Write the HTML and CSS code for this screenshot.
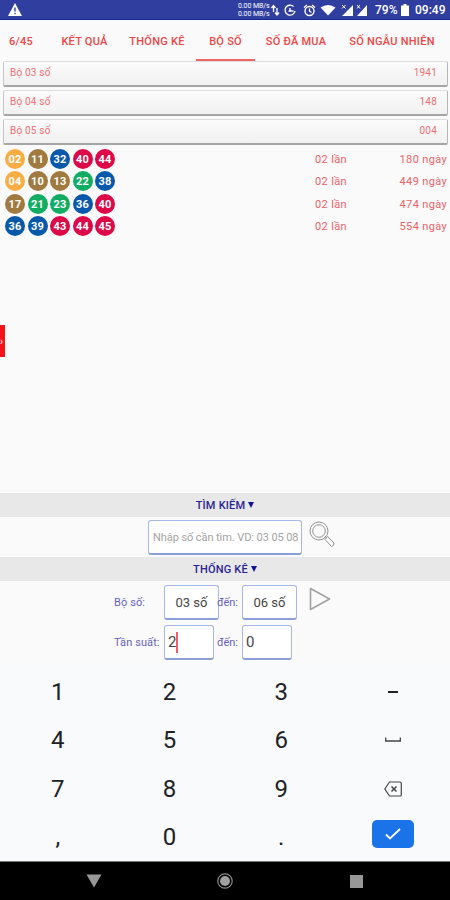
FILE: index.html
```html
<!DOCTYPE html>
<html lang="vi">
<head>
    <meta charset="UTF-8">
    <meta name="viewport" content="width=device-width, initial-scale=1.0">
    <title>Bộ số 6/45</title>
    <link rel="stylesheet" href="styles.css">
</head>
<body>
    <!-- Status bar -->
    <header class="status-bar">
        <svg class="warning" width="14" height="13" viewBox="0 0 14 13"><path d="M7 0L14 13H0Z" fill="#fff"/><path d="M7 4.5v4M7 9.7v1.5" stroke="#303f9f" stroke-width="1.4"/></svg>
        <div class="net-speed"><span>0.00 MB/s</span><span>0.00 MB/s</span></div>
        <svg class="status-icons" width="98" height="20" viewBox="0 0 98 20" fill="none" stroke="#fff">
            <path d="M2.500 12V6M.5 8l2-2.500 2 2.500M6 8v6.500M4 12.500l2 2.500 2-2.500" stroke-width="1.300"/>
            <path d="M22.500 6.500a5 5 0 1 0 1.500 4.500M19 8v3h3M17.500 11h5" stroke-width="1.400"/>
            <circle cx="38.500" cy="11" r="4.500" stroke-width="1.400"/>
            <path d="M38.500 8.500V11l2 1.500M33 7.500l3-2.500M44 7.500l-3-2.500" stroke-width="1.300"/>
            <path d="M49.500 7.500Q57 2.500 64.500 7.500L57 15.500Z" fill="#fff" stroke="none"/>
            <path d="M82 5v11H71ZM96 5v11H86Z" fill="#fff" stroke="none"/>
            <path d="M71 5l3.500 3.500M74.500 5L71 8.500M86 5l3 3.500M89 5l-3 3.500" stroke-width="1"/>
        </svg>
        <span class="battery-text">79%</span>
        <svg class="battery" width="8" height="12" viewBox="0 0 8 12"><path d="M2.500 0h3v1.500H8V12H0V1.500h2.500Z" fill="#fff"/></svg>
        <span class="clock">09:49</span>
    </header>

    <!-- Tabs -->
    <nav class="tabs">
        <a class="tab first">6/45</a>
        <a class="tab">KẾT QUẢ</a>
        <a class="tab">THỐNG KÊ</a>
        <a class="tab active">BỘ SỐ</a>
        <a class="tab">SỐ ĐÃ MUA</a>
        <a class="tab">SỐ NGẪU NHIÊN</a>
    </nav>

    <main class="content">
        <div class="groups">
            <div class="group"><span>Bộ 03 số</span><span>1941</span></div>
            <div class="group"><span>Bộ 04 số</span><span>148</span></div>
            <div class="group"><span>Bộ 05 số</span><span>004</span></div>
        </div>

        <div class="results">
            <div class="result">
                <div class="balls"><b class="orange">02</b><b class="brown">11</b><b class="blue">32</b><b class="red">40</b><b class="red">44</b></div>
                <span class="times">02 lần</span><span class="days">180 ngày</span>
            </div>
            <div class="result">
                <div class="balls"><b class="orange">04</b><b class="brown">10</b><b class="brown">13</b><b class="green">22</b><b class="blue">38</b></div>
                <span class="times">02 lần</span><span class="days">449 ngày</span>
            </div>
            <div class="result">
                <div class="balls"><b class="brown">17</b><b class="green">21</b><b class="green">23</b><b class="blue">36</b><b class="red">40</b></div>
                <span class="times">02 lần</span><span class="days">474 ngày</span>
            </div>
            <div class="result">
                <div class="balls"><b class="blue">36</b><b class="blue">39</b><b class="red">43</b><b class="red">44</b><b class="red">45</b></div>
                <span class="times">02 lần</span><span class="days">554 ngày</span>
            </div>
        </div>
        <div class="drawer-handle">›</div>
    </main>

    <!-- Search -->
    <h2 class="section-title">TÌM KIẾM <i></i></h2>
    <div class="search">
        <div class="box search-box">Nhập số cần tìm. VD: 03 05 08</div>
        <svg width="26" height="27" viewBox="0 0 26 27" fill="none" stroke="#929292" stroke-width="1">
            <circle cx="10" cy="10" r="9"/><circle cx="10" cy="10" r="6.300"/>
            <path d="M15 17l2-2M16 18.500l2.500-3 6.500 6.500q.5 2.500-2.500 3.500Z"/>
        </svg>
    </div>

    <!-- Statistics -->
    <h2 class="section-title">THỐNG KÊ <i></i></h2>
    <div class="stats">
        <div class="stats-row">
            <span class="label">Bộ số:</span>
            <div class="box select">03 số</div>
            <span class="label to">đến:</span>
            <div class="box select">06 số</div>
            <svg class="play" width="22" height="24" viewBox="0 0 22 24"><path d="M1.500 1.500L20.500 12L1.500 22.500Z" fill="none" stroke="#a2a2a2" stroke-width="1.600" stroke-linejoin="round"/></svg>
        </div>
        <div class="stats-row">
            <span class="label">Tần suất:</span>
            <div class="box number">2<span class="caret"></span></div>
            <span class="label to wide">đến:</span>
            <div class="box number">0</div>
        </div>
    </div>

    <!-- Keyboard -->
    <div class="keyboard">
        <span>1</span><span>2</span><span>3</span>
        <span><svg width="12" height="24" viewBox="0 0 12 24"><path d="M1 12h10" stroke="#222" stroke-width="2"/></svg></span>
        <span>4</span><span>5</span><span>6</span>
        <span><svg width="16" height="24" viewBox="0 0 16 24"><path d="M.7 9.500v3.500h14.600V9.500" fill="none" stroke="#444" stroke-width="1.300"/></svg></span>
        <span>7</span><span>8</span><span>9</span>
        <span><svg width="18" height="16" viewBox="0 0 18 16" fill="none" stroke="#444" stroke-width="1.200"><path d="M5.500 1H16q1.300 0 1.300 1.300v11.400Q17.300 15 16 15H5.500L.8 8Z"/><path d="M7.500 5.500l5 5M12.500 5.500l-5 5" stroke-width="1.500"/></svg></span>
        <span>,</span><span>0</span><span>.</span>
        <span class="enter-cell"><span class="enter"><svg width="16" height="12" viewBox="0 0 16 12"><path d="M1 6.500l4 4L15 1" fill="none" stroke="#fff" stroke-width="1.800"/></svg></span></span>
    </div>

    <!-- Android navigation -->
    <footer class="nav-bar">
        <svg width="16" height="14" viewBox="0 0 16 14"><path d="M.5.5h15L8 13.500Z" fill="#979797"/></svg>
        <svg width="16" height="16" viewBox="0 0 16 16"><circle cx="8" cy="8" r="7.200" fill="none" stroke="#8b8b8b" stroke-width="1.200"/><circle cx="8" cy="8" r="5" fill="#a0a0a0"/></svg>
        <svg width="13" height="13" viewBox="0 0 13 13"><path d="M0 0h13v13H0Z" fill="#979797"/></svg>
    </footer>
</body>
</html>
```

FILE: styles.css
```css
* {
    box-sizing: border-box;
}
body {
    width: 450px;
    height: 900px;
    margin: 0;
    display: flex;
    flex-direction: column;
    overflow: hidden;
    background: #fafafa;
    font-family: Roboto, sans-serif;
}
svg {
    display: block;
    flex: none;
}

/* Status bar */
.status-bar {
    height: 20px;
    display: flex;
    align-items: center;
    background: #303f9f;
    border-bottom: 1px solid #1c2590;
    color: #fff;
}
.warning {
    margin-left: 8px;
}
.net-speed {
    width: 33px;
    margin-left: 216px;
    display: flex;
    flex-direction: column;
    font-size: 7px;
    line-height: 8px;
    letter-spacing: -0.1px;
    white-space: nowrap;
}
.status-icons {
    margin-right: 6px;
}
.battery-text,
.clock {
    font-size: 12px;
    font-weight: 500;
}
.battery-text {
    width: 26px;
}
.clock {
    margin-left: 6px;
}

/* Tabs */
.tabs {
    height: 41px;
    display: grid;
    grid-template-columns: 51px 67px 78px 59px 82px 110px;
}
.tab {
    padding-top: 3px;
    display: flex;
    align-items: center;
    justify-content: center;
    border-bottom: 2px solid transparent;
    color: #ef4545;
    font-size: 11px;
    font-weight: 500;
    letter-spacing: 0.25px;
    white-space: nowrap;
}
.first {
    padding-right: 9px;
}
.active {
    border-color: #f06464;
}

/* Groups */
.content {
    position: relative;
    flex: none;
    height: 432px;
}
.groups {
    display: flex;
    flex-direction: column;
    gap: 3px;
    padding: 0 2px 0 3px;
}
.group {
    height: 26px;
    padding: 4px 10px 0 6px;
    display: flex;
    justify-content: space-between;
    background: linear-gradient(#fbfbfb, #f1f1f1);
    border: 1px solid #dedede;
    border-bottom: 2px solid #a5a5a5;
    border-right-color: #b5b5b5;
    border-left-color: #c5c5c5;
    border-radius: 2px;
    color: #ef6f74;
    font-size: 10px;
    line-height: 13px;
    letter-spacing: 0.2px;
}

/* Results */
.results {
    padding: 4px 3px 0 5px;
}
.result {
    height: 22.4px;
    display: flex;
    color: #ee6267;
    font-size: 11px;
    line-height: 21px;
    letter-spacing: 0.35px;
}
.balls {
    width: 310px;
    display: flex;
    gap: 2.5px;
}
.balls b {
    width: 20px;
    height: 20px;
    border-radius: 50%;
    color: #fff;
    font-weight: 700;
    letter-spacing: 0.2px;
    text-align: center;
}
.orange { background: #f9ad43; }
.brown { background: #a17a40; }
.blue { background: #0959aa; }
.red { background: #dc0848; }
.green { background: #12ad62; }
.days {
    margin-left: auto;
}
.drawer-handle {
    position: absolute;
    left: 0;
    top: 264px;
    width: 5px;
    height: 32px;
    background: #f51218;
    color: #fff;
    font-size: 10px;
    line-height: 33px;
}

/* Search */
.section-title {
    height: 24px;
    flex: none;
    margin: 0;
    display: flex;
    align-items: center;
    justify-content: center;
    gap: 3px;
    background: #e8e8e8;
    color: #2a2492;
    font-size: 11px;
    font-weight: 500;
    letter-spacing: 0.2px;
}
.section-title i {
    border: 3.5px solid transparent;
    border-top: 6px solid #14148c;
    border-bottom: 0;
}
.search {
    height: 40px;
    flex: none;
    display: flex;
    align-items: flex-start;
    gap: 7px;
    padding: 3px 0 0 148px;
}
.search svg {
    margin-top: 1px;
}
.box {
    height: 35px;
    flex: none;
    display: flex;
    align-items: center;
    background: #fff;
    border: 1px solid #a6b7ea;
    border-bottom: 2px solid #8b9fd9;
    border-radius: 3px;
    color: #444;
}
.search-box {
    width: 154px;
    padding-left: 4px;
    color: #a3a3a3;
    font-size: 11px;
    letter-spacing: -0.08px;
    white-space: nowrap;
}

/* Statistics */
.stats {
    height: 81px;
    flex: none;
    display: flex;
    flex-direction: column;
    gap: 5px;
    padding: 4px 0 0 114px;
}
.stats-row {
    display: flex;
    align-items: center;
}
.label {
    width: 50px;
    color: #6662bb;
    font-size: 11px;
    letter-spacing: 0.1px;
    white-space: nowrap;
}
.to {
    width: 23px;
    text-indent: -2px;
    letter-spacing: -0.1px;
}
.wide {
    width: 28px;
    padding-left: 5px;
}
.select {
    width: 55px;
    justify-content: center;
    font-size: 13px;
}
.number {
    width: 50px;
    padding-left: 3px;
    font-size: 15px;
}
.caret {
    width: 1.5px;
    height: 21px;
    background: #f75c64;
}
.play {
    margin: -7px 0 0 12px;
}

/* Keyboard */
.keyboard {
    height: 199px;
    flex: none;
    display: grid;
    grid-template-columns: 111.7px 111.7px 111.7px 111.7px;
    grid-template-rows: repeat(4, 48.3px);
    padding: 6px 0 0 2px;
    background: #f8fafc;
    color: #202124;
    font-size: 24px;
}
.keyboard > span {
    display: flex;
    align-items: center;
    justify-content: center;
}
.keyboard > .enter-cell {
    padding-bottom: 7px;
}
.enter {
    width: 42px;
    height: 28px;
    display: flex;
    align-items: center;
    justify-content: center;
    background: #1a73e8;
    border-radius: 5px;
}

/* Android navigation */
.nav-bar {
    flex: 1;
    display: flex;
    align-items: center;
    gap: 115px;
    padding-left: 86px;
    background: #000;
    border-top: 1px solid #777;
}
.nav-bar svg:last-child {
    margin-left: 2px;
}
```
